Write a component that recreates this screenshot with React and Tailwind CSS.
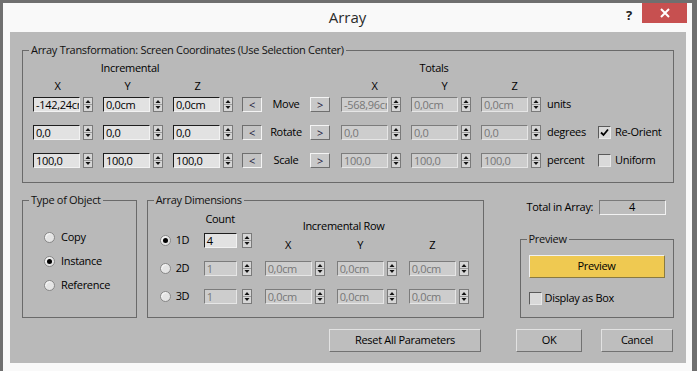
import React from 'react';
import clsx from 'clsx';

const Spinner = ({ className }) => (
    <svg width="10" height="15" viewBox="0 0 10 15" className={clsx('shrink-0', className)}>
        <rect x="0.5" y="0.5" width="9" height="14" fill="#d6d6d6" stroke="#7a7a7a" />
        <line x1="1" y1="7.5" x2="9" y2="7.5" stroke="#9a9a9a" />
        <path d="M2.5 6 L5 3 L7.5 6 Z" fill="#111" />
        <path d="M2.5 9 L5 12 L7.5 9 Z" fill="#111" />
    </svg>
);

const Field = ({ value, off, w = 'w-[47px]', gap = 'ml-[3px]' }) => (
    <div className="flex items-center">
        <div
            className={clsx(
                'h-[15px] overflow-hidden whitespace-nowrap border pl-[2px] text-[11px] leading-[13px]',
                w,
                off
                    ? 'bg-[#cdcdcd] text-[#777] border-t-[#7c7c7c] border-l-[#7c7c7c] border-b-[#e6e6e6] border-r-[#e6e6e6]'
                    : 'bg-[#e2e2e2] text-black border-t-[#1e1e1e] border-l-[#1e1e1e] border-b-[#f2f2f2] border-r-[#f2f2f2]'
            )}
        >
            {value}
        </div>
        <Spinner className={gap} />
    </div>
);

const Radio = ({ on }) => (
    <div className="flex h-[11px] w-[11px] shrink-0 items-center justify-center rounded-full border border-[#868686] bg-[#e4e4e4] shadow-[inset_1px_1px_1px_#f8f8f8]">
        {on && <div className="h-[5px] w-[5px] rounded-full bg-black" />}
    </div>
);

const Check = ({ on }) => (
    <div className="flex h-[13px] w-[13px] shrink-0 items-center justify-center border border-t-[#5a5a5a] border-l-[#5a5a5a] border-b-[#e8e8e8] border-r-[#e8e8e8] bg-[#d9d9d9]">
        {on && (
            <svg width="9" height="9" viewBox="0 0 9 9">
                <path d="M1 4.5 L3.5 7 L8 1.5" fill="none" stroke="#000" strokeWidth="1.8" />
            </svg>
        )}
    </div>
);

const Arrow = ({ children, pressed }) => (
    <div
        className={clsx(
            'flex h-[15px] w-[20px] items-center justify-center border text-[11px] leading-none text-[#1a1a3a]',
            pressed
                ? 'bg-[#c4c4c4] border-t-[#6e6e6e] border-l-[#6e6e6e] border-b-[#f4f4f4] border-r-[#f4f4f4]'
                : 'bg-[#c8c8c8] border-t-[#f4f4f4] border-l-[#f4f4f4] border-b-[#6e6e6e] border-r-[#6e6e6e]'
        )}
    >
        {children}
    </div>
);

const Legend = ({ children }) => (
    <legend className="ml-[6px] px-[2px] text-[11px] leading-[14px] text-[#111]">{children}</legend>
);

const Heads = ({ className }) => (
    <div className={clsx('flex gap-[23px] text-[11px] leading-[14px]', className)}>
        <span className="w-[47px] text-center">X</span>
        <span className="w-[47px] text-center">Y</span>
        <span className="w-[47px] text-center">Z</span>
    </div>
);

const rows = [
    { inc: ['-142,24cm', '0,0cm', '0,0cm'], label: 'Move', tot: ['-568,96cm', '0,0cm', '0,0cm'], unit: 'units' },
    { inc: ['0,0', '0,0', '0,0'], label: 'Rotate', tot: ['0,0', '0,0', '0,0'], unit: 'degrees', check: 'Re-Orient', on: true },
    { inc: ['100,0', '100,0', '100,0'], label: 'Scale', tot: ['100,0', '100,0', '100,0'], unit: 'percent', check: 'Uniform' },
];

const Button = ({ children, w }) => (
    <div
        className={clsx(
            'flex h-[23px] items-center justify-center border border-t-[#e2e2e2] border-l-[#e2e2e2] border-b-[#727272] border-r-[#727272] bg-[#bebebe] text-[11px] text-black',
            w
        )}
    >
        {children}
    </div>
);

const App = () => {
    return (
        <div className="h-[371px] w-[697px] overflow-hidden bg-[#6f6f6f] pl-[3px] pt-[3px] font-['Open_Sans',sans-serif] tracking-[-0.3px] text-black">
            <div className="flex h-[368px] w-[689px] flex-col bg-[#f9f9f9]">
                {/* title bar */}
                <div className="grid h-[29px] grid-cols-[1fr_auto_1fr]">
                    <div />
                    <div className="pt-[4px] text-[15px] leading-[20px] tracking-normal text-[#2b2b2b]">Array</div>
                    <div className="flex justify-end">
                        <span className="mr-[10px] pt-[3px] text-[13px] font-bold leading-[18px] text-[#222]">?</span>
                        <div className="mr-[5px] flex h-[20px] w-[45px] items-center justify-center bg-[#c75050]">
                            <svg width="10" height="10" viewBox="0 0 10 10">
                                <path d="M1 1 L9 9 M9 1 L1 9" stroke="#fff" strokeWidth="2" />
                            </svg>
                        </div>
                    </div>
                </div>

                {/* body */}
                <div className="ml-[7px] h-[331px] w-[676px] bg-[#b9b9b9] px-[12px] pt-[11px]">
                    <fieldset className="border border-[#6a6a6a]">
                        <Legend>Array Transformation: Screen Coordinates (Use Selection Center)</Legend>
                        <div className="pb-[14px] pl-[10px] pt-[4px]">
                            <div className="flex text-[11px] leading-[14px]">
                                <span className="w-[194px] text-center">Incremental</span>
                                <span className="ml-[114px] w-[186px] text-center">Totals</span>
                            </div>
                            <div className="mt-[4px] flex">
                                <Heads className="pl-[1px]" />
                                <Heads className="ml-[130px]" />
                            </div>
                            <div className="mt-[4px] flex flex-col gap-[13px]">
                                {rows.map((r, i) => (
                                    <div key={i} className="flex h-[15px] items-center text-[11px]">
                                        <Field value={r.inc[0]} />
                                        <div className="ml-[10px]"><Field value={r.inc[1]} /></div>
                                        <div className="ml-[10px]"><Field value={r.inc[2]} /></div>
                                        <div className="ml-[9px]"><Arrow pressed>&lt;</Arrow></div>
                                        <span className="w-[48px] text-center">{r.label}</span>
                                        <Arrow>&gt;</Arrow>
                                        <div className="ml-[11px]"><Field value={r.tot[0]} off /></div>
                                        <div className="ml-[10px]"><Field value={r.tot[1]} off /></div>
                                        <div className="ml-[10px]"><Field value={r.tot[2]} off /></div>
                                        <span className="ml-[6px] w-[51px]">{r.unit}</span>
                                        {r.check && (
                                            <>
                                                <Check on={r.on} />
                                                <span className="ml-[4px]">{r.check}</span>
                                            </>
                                        )}
                                    </div>
                                ))}
                            </div>
                        </div>
                    </fieldset>

                    <div className="mt-[10px] flex text-[11px]">
                        <fieldset className="h-[125px] w-[115px] border border-[#6a6a6a]">
                            <Legend>Type of Object</Legend>
                            <div className="flex flex-col gap-[10px] pl-[21px] pt-[23px]">
                                {[['Copy', false], ['Instance', true], ['Reference', false]].map(([t, on]) => (
                                    <div key={t} className="flex h-[14px] items-center">
                                        <Radio on={on} />
                                        <span className="ml-[6px]">{t}</span>
                                    </div>
                                ))}
                            </div>
                        </fieldset>

                        <fieldset className="ml-[10px] h-[125px] w-[338px] border border-[#6a6a6a]">
                            <Legend>Array Dimensions</Legend>
                            <div className="flex pl-[12px]">
                                <div className="flex flex-col pt-[5px]">
                                    <span className="ml-[44px] w-[33px] text-center leading-[14px]">Count</span>
                                    <div className="mt-[7px] flex flex-col gap-[13px]">
                                        {[['1D', '4', true], ['2D', '1', false], ['3D', '1', false]].map(([t, v, on]) => (
                                            <div key={t} className="flex h-[15px] items-center">
                                                <Radio on={on} />
                                                <span className="ml-[5px] w-[28px]">{t}</span>
                                                <Field value={v} off={!on} w="w-[33px]" gap="ml-[5px]" />
                                            </div>
                                        ))}
                                    </div>
                                </div>
                                <div className="ml-[13px] flex flex-col pt-[12px]">
                                    <span className="ml-[38px] leading-[14px]">Incremental Row</span>
                                    <div className="mt-[5px] flex gap-[25px] leading-[14px]">
                                        <span className="w-[47px] text-center">X</span>
                                        <span className="w-[47px] text-center">Y</span>
                                        <span className="w-[47px] text-center">Z</span>
                                    </div>
                                    <div className="mt-[9px] flex flex-col gap-[13px]">
                                        {[0, 1].map((i) => (
                                            <div key={i} className="flex h-[15px] gap-[12px]">
                                                <Field value="0,0cm" off />
                                                <Field value="0,0cm" off />
                                                <Field value="0,0cm" off />
                                            </div>
                                        ))}
                                    </div>
                                </div>
                            </div>
                        </fieldset>

                        <div className="ml-[36px] flex w-[155px] flex-col pt-[7px]">
                            <div className="flex h-[15px] items-center">
                                <span className="ml-[7px] w-[72px]">Total in Array:</span>
                                <div className="flex h-[15px] w-[67px] items-center justify-center border border-t-[#7a7a7a] border-l-[#7a7a7a] border-b-[#f2f2f2] border-r-[#f2f2f2] bg-[#bdbdbd]">
                                    4
                                </div>
                            </div>
                            <fieldset className="mt-[17px] h-[86px] border border-[#6a6a6a]">
                                <Legend>Preview</Legend>
                                <div className="flex flex-col pl-[8px] pt-[9px]">
                                    <div className="flex h-[23px] w-[136px] items-center justify-center border border-t-[#f0f0f0] border-l-[#f0f0f0] border-b-[#8a7a40] border-r-[#8a7a40] bg-[#efc951] text-black">
                                        Preview
                                    </div>
                                    <div className="mt-[14px] flex h-[13px] items-center">
                                        <Check />
                                        <span className="ml-[3px]">Display as Box</span>
                                    </div>
                                </div>
                            </fieldset>
                        </div>
                    </div>

                    <div className="mt-[11px] flex justify-end pr-[1px]">
                        <Button w="w-[152px]">Reset All Parameters</Button>
                        <div className="ml-[35px]"><Button w="w-[66px]">OK</Button></div>
                        <div className="ml-[19px]"><Button w="w-[72px]">Cancel</Button></div>
                    </div>
                </div>
            </div>
        </div>
    );
};

export default App;
